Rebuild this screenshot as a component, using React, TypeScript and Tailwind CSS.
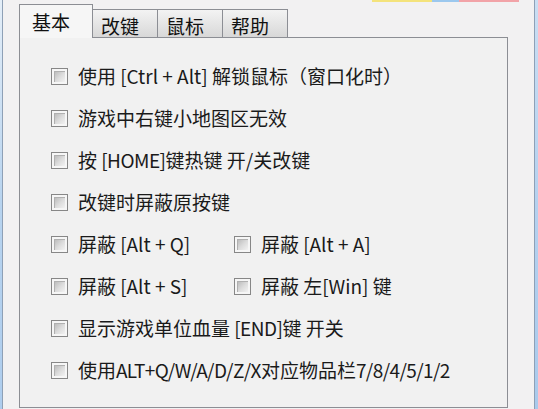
import React from "react";

const font = { fontFamily: '"Noto Sans CJK SC", "Noto Sans", sans-serif' };

function Box() {
  return (
    <div className="w-[17px] h-[17px] shrink-0 border border-[#878787] bg-[#f6f6f6] p-[2px]">
      <div className="w-full h-full bg-gradient-to-br from-[#bdbdbd] via-[#dcdcdc] to-[#f2f2f2] border-t border-l border-[#b0b0b0]" />
    </div>
  );
}

function Item({ children, w }: { children: React.ReactNode; w?: string }) {
  return (
    <div className={`flex items-center gap-[10px] ${w ?? ""}`}>
      <Box />
      <span className="whitespace-nowrap text-[19px] leading-[42px] text-[#1a1a1a]">{children}</span>
    </div>
  );
}

export default function App() {
  return (
    <div
      className="w-[538px] h-[409px] bg-[#f0f0f0] flex overflow-hidden"
      style={font}
    >
      {/* left window frame */}
      <div className="w-[7px] h-full bg-gradient-to-b from-[#e4eef8] via-[#b7d3ef] to-[#aecdee] border-r border-[#8ea0b6]" />

      {/* main area */}
      <div className="flex-1 flex flex-col pl-[16px] pr-[15px] bg-[#f2f1f2]">
        {/* top colored remnants */}
        <div className="h-[2px] flex">
          <div className="w-[353px]" />
          <div className="w-[60px] bg-[#f4e37c]" />
          <div className="w-[27px] bg-[#9cc8ee]" />
          <div className="w-[60px] bg-[#f2a3a8]" />
        </div>

        {/* tabs */}
        <div className="mt-[2px] h-[33px] flex items-start">
          <div className="relative z-10 w-[74px] h-[34px] bg-[#f6f6f6] border-l border-t border-r border-[#8c8e94] pl-[12px] flex items-center">
            <span className="text-[19px] leading-none text-[#111]">基本</span>
          </div>
          {["改键", "鼠标", "帮助"].map((t) => (
            <div
              key={t}
              className="mt-[5px] w-[65px] h-[28px] bg-gradient-to-b from-[#f3f3f3] to-[#d8d8d8] border-t border-r border-[#8c8e94] pl-[8px] pt-[3px] flex items-center"
            >
              <span className="text-[19px] leading-none text-[#111]">{t}</span>
            </div>
          ))}
        </div>

        {/* panel */}
        <div className="w-[489px] h-[371px] border border-[#8c8e94] bg-[#f1f1f1] pl-[31px] pt-[17px] flex flex-col">
          <Item>使用 [Ctrl + Alt] 解锁鼠标（窗口化时）</Item>
          <Item>游戏中右键小地图区无效</Item>
          <Item>
            按 <span className="tracking-[-0.5px]">[HOME]</span>键热键 开/关改键
          </Item>
          <Item>改键时屏蔽原按键</Item>
          <div className="flex">
            <Item w="w-[183px]">屏蔽 [Alt + Q]</Item>
            <Item>屏蔽 [Alt + A]</Item>
          </div>
          <div className="flex">
            <Item w="w-[183px]">屏蔽 [Alt + S]</Item>
            <Item>屏蔽 左[Win] 键</Item>
          </div>
          <Item>
            显示游戏单位血量 <span className="tracking-[-0.5px]">[END]</span>键 开关
          </Item>
          <Item>
            使用<span className="tracking-[-0.6px]">ALT+Q/W/A/D/Z/X</span>对应物品栏
            <span className="tracking-[-0.6px]">7/8/4/5/1/2</span>
          </Item>
        </div>
      </div>

      {/* right window frame */}
      <div className="w-[11px] h-full bg-gradient-to-b from-[#c9def3] via-[#b4d1ef] to-[#a9caec] border-l border-[#8ea0b6]" />
    </div>
  );
}
